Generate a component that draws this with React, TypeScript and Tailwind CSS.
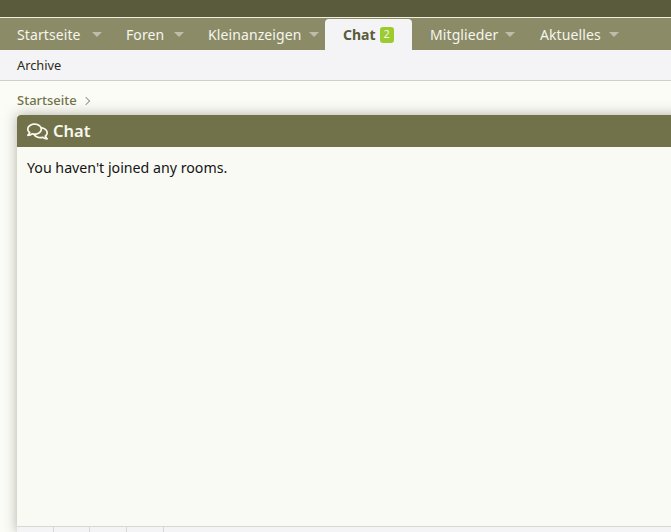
import { FaRegComments } from 'react-icons/fa';

const leftTabs = [
  { label: 'Startseite', width: 'w-[109px]', inset: 'pl-[17px]', arrow: 'pr-[7px]' },
  { label: 'Foren', width: 'w-[82px]', inset: 'pl-[17px]', arrow: 'pr-[7px]' },
  { label: 'Kleinanzeigen', width: 'w-[134px]', inset: 'pl-[17px]', arrow: 'pr-[6px]' },
];

const rightTabs = [
  { label: 'Mitglieder', width: 'w-[110px]', inset: 'pl-[18px]', arrow: 'pr-[7px]' },
  { label: 'Aktuelles', width: 'w-[100px]', inset: 'pl-[18px]', arrow: 'pr-[3px]' },
];

interface NavTabProps {
  label: string;
  width: string;
  inset: string;
  arrow: string;
}

function NavTab({ label, width, inset, arrow }: NavTabProps) {
  return (
    <div className={`${width} ${inset} ${arrow} flex items-center justify-between pt-[1px] text-[14px] tracking-[0.1px] text-[#f6f6ec]`}>
      <span>{label}</span>
      <span className="h-0 w-0 border-x-[5px] border-t-[5px] border-x-transparent border-t-[#bdbdaa]" />
    </div>
  );
}

export default function App() {
  return (
    <div className="h-[532px] w-[671px] overflow-hidden bg-[#fcfcf7] font-['Noto_Sans',sans-serif]">
      <div className="h-[17px] bg-[#5a5a3c]" />
      <div className="h-px bg-[#f0f0d8]" />
      <nav className="flex h-[32px] bg-[#8b8b68]">
        {leftTabs.map((tab) => (
          <NavTab key={tab.label} {...tab} />
        ))}
        <div className="mt-px flex h-[32px] w-[87px] items-center gap-[4px] rounded-t-[4px] bg-[#f4f4f6] pb-[1px] pl-[18px] text-[14px] font-bold text-[#5a5a3c]">
          <span>Chat</span>
          <span className="flex h-[16px] w-[14px] items-center justify-center rounded-[3px] bg-[#9ccb2e] text-[11px] font-normal text-[#f4f4f6]">
            2
          </span>
        </div>
        {rightTabs.map((tab) => (
          <NavTab key={tab.label} {...tab} />
        ))}
      </nav>
      <div className="flex h-[31px] items-center border-b border-[#cfcfcb] bg-[#f4f4f6] pl-[17px] pt-[2px] text-[12.8px] text-[#2a2a20]">
        Archive
      </div>
      <div className="flex h-[34px] items-center gap-[6px] pl-[17px] pt-[6px] text-[13px] font-medium text-[#72724a]">
        <span>Startseite</span>
        <span className="h-[6px] w-[6px] rotate-45 border-r-[1.5px] border-t-[1.5px] border-[#9a9a88]" />
      </div>
      <div className="ml-[17px] flex h-[417px] w-[670px] flex-col shadow-[0_0_12px_rgba(60,60,40,0.4)]">
        <div className="flex h-[32px] shrink-0 items-center gap-[5px] rounded-t-[4px] bg-[#72724a] pl-[10px] text-[16.5px] font-semibold text-[#f8f8ee]">
          <FaRegComments className="h-[21px] w-[21px]" />
          <span>Chat</span>
        </div>
        <div className="h-[380px] shrink-0 border-b border-[#d8d8d2] bg-[#fafaf5] px-[10px] pt-[10px] text-[14.2px] text-[#141414]">
          You haven't joined any rooms.
        </div>
        <div className="flex flex-1 bg-[#f4f4f6]">
          {[37, 36, 37, 37].map((w, i) => (
            <div key={i} style={{ width: w }} className="border-r border-[#d8d8d2]" />
          ))}
        </div>
      </div>
    </div>
  );
}
